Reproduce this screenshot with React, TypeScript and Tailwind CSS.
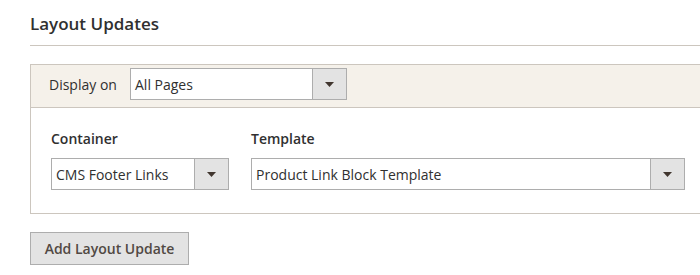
const Arrow = () => (
  <svg width="9" height="5" viewBox="0 0 9 5" className="block">
    <path d="M0 0H9L4.5 5Z" fill="#41362f" />
  </svg>
);

const Select = ({ value, width }: { value: string; width: string }) => (
  <div
    className={`flex h-[32px] ${width} border border-[#adadad] bg-white text-[14px] text-[#303030]`}
  >
    <div className="flex flex-1 items-center pl-[4px] whitespace-nowrap">{value}</div>
    <div className="flex w-[34px] items-center justify-center border-l border-[#adadad] bg-[#e3e3e3]">
      <Arrow />
    </div>
  </div>
);

export default function App() {
  return (
    <div
      className="h-[275px] w-[700px] overflow-hidden bg-white pl-[30px]"
      style={{ fontFamily: '"Open Sans", "Liberation Sans", sans-serif' }}
    >
      {/* Section title */}
      <div className="w-[700px] border-b border-[#ccc6be] pt-[12px] pb-[9px]">
        <h2 className="text-[17px] leading-[24px] font-semibold text-[#303030]">
          Layout Updates
        </h2>
      </div>

      {/* Layout update block */}
      <div className="mt-[18px] w-[700px] border border-[#ccc6be]">
        <div className="flex items-center border-b border-[#ccc6be] bg-[#f5f1ea] pt-[3px] pb-[7px] pl-[18px]">
          <span className="w-[81px] text-[14px] text-[#303030]">Display on</span>
          <Select value="All Pages" width="w-[217px]" />
        </div>
        <div className="flex gap-[22px] pt-[21px] pb-[23px] pl-[20px]">
          <div className="flex flex-col gap-[9px]">
            <span className="text-[14px] leading-[20px] font-semibold text-[#303030]">
              Container
            </span>
            <Select value="CMS Footer Links" width="w-[178px]" />
          </div>
          <div className="flex flex-col gap-[9px]">
            <span className="text-[14px] leading-[20px] font-semibold text-[#303030]">
              Template
            </span>
            <Select value="Product Link Block Template" width="w-[434px]" />
          </div>
        </div>
      </div>

      <button className="mt-[18px] h-[33px] w-[159px] border border-[#adadad] bg-[#e3e3e3] text-[14px] font-semibold text-[#514943]">
        Add Layout Update
      </button>
    </div>
  );
}
